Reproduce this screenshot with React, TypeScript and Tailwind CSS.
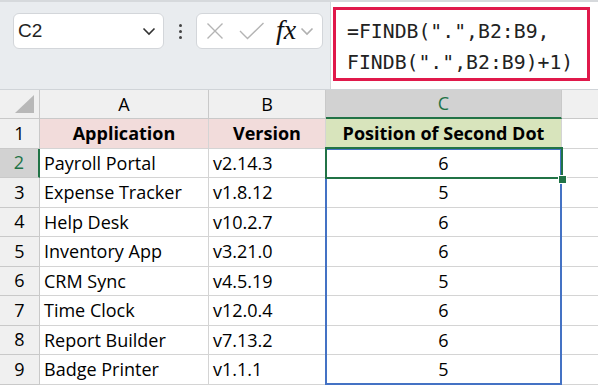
import React from "react";

const rows = [
  ["Payroll Portal", "v2.14.3", "6"],
  ["Expense Tracker", "v1.8.12", "5"],
  ["Help Desk", "v10.2.7", "6"],
  ["Inventory App", "v3.21.0", "6"],
  ["CRM Sync", "v4.5.19", "5"],
  ["Time Clock", "v12.0.4", "6"],
  ["Report Builder", "v7.13.2", "6"],
  ["Badge Printer", "v1.1.1", "5"],
];

function Chevron({ color }: { color: string }) {
  return (
    <svg width="14" height="9" viewBox="0 0 14 9" fill="none">
      <path d="M1.5 1.5 L7 7 L12.5 1.5" stroke={color} strokeWidth="1.6" />
    </svg>
  );
}

export default function App() {
  return (
    <div className="w-[598px] h-[388px] overflow-hidden bg-white relative font-['Open_Sans',sans-serif] text-black">
      {/* Toolbar */}
      <div className="h-[90px] bg-[#e9ecef] border-b border-[#d0d4d8] flex relative">
        <div className="absolute left-0 right-0 top-0 h-[2px] bg-[#d6d9dc]" />
        <div className="pt-[13px] pl-[13px] flex items-start">
          <div className="w-[151px] h-[36px] bg-white border border-[#d3d6da] rounded-[6px] flex items-center justify-between pl-[4px] pr-[7px]">
            <span className="text-[19px] font-['Liberation_Sans',sans-serif] text-[#222]">C2</span>
            <Chevron color="#333" />
          </div>
          <div className="w-[32px] h-[36px] flex flex-col items-center justify-center gap-[3px]">
            <div className="w-[3px] h-[3px] rounded-full bg-[#444]" />
            <div className="w-[3px] h-[3px] rounded-full bg-[#444]" />
            <div className="w-[3px] h-[3px] rounded-full bg-[#444]" />
          </div>
          <div className="w-[127px] h-[36px] bg-white border border-[#d3d6da] rounded-[6px] flex items-center pl-[9px] pr-[4px]">
            <svg width="18" height="18" viewBox="0 0 18 18" fill="none">
              <path d="M1.5 1.5 L16.5 16.5 M16.5 1.5 L1.5 16.5" stroke="#b4b4b4" strokeWidth="1.4" />
            </svg>
            <svg width="26" height="18" viewBox="0 0 26 18" fill="none" className="ml-[15px]">
              <path d="M1 9 L8.5 16.5 L24.5 1" stroke="#b4b4b4" strokeWidth="1.4" />
            </svg>
            <span className="ml-[11px] text-[28px] italic font-['Liberation_Serif',serif] text-[#111] leading-none mb-[3px]">fx</span>
            <span className="ml-[4px] flex items-center">
              <Chevron color="#b0b0b0" />
            </span>
          </div>
        </div>
        <div className="ml-auto w-[268px] bg-white border-l border-[#d3d6da] mt-[2px] relative">
          <div className="pl-[16px] pt-[14px] font-['DejaVu_Sans_Mono',monospace] text-[19.8px] leading-[31px] text-[#222] whitespace-pre">
            <div>=FINDB(".",B2:B9,</div>
            <div>FINDB(".",B2:B9)+1)</div>
          </div>
          <div className="absolute left-[2px] top-[5px] w-[257px] h-[74px] border-[3px] border-[#e0194b]" />
        </div>
      </div>

      {/* Grid */}
      <div className="relative">
        {/* Column header row */}
        <div className="flex h-[29px] text-[18px]">
          <div className="w-[40px] shrink-0 bg-[#f0f0f0] border-r border-b border-[#c9c9c9] relative">
            <svg width="20" height="18" viewBox="0 0 20 18" className="absolute right-[4px] bottom-[5px]">
              <path d="M19 0 L19 18 L0 18 Z" fill="#b8b8b8" />
            </svg>
          </div>
          <div className="w-[169px] shrink-0 bg-[#f0f0f0] border-r border-b border-[#c9c9c9] flex items-center justify-center">A</div>
          <div className="w-[117px] shrink-0 bg-[#f0f0f0] border-r border-b border-[#c9c9c9] flex items-center justify-center">B</div>
          <div className="w-[236px] shrink-0 bg-[#d2d2d2] border-r border-[#c9c9c9] border-b-2 border-b-[#217346] flex items-center justify-center text-[#217346]">C</div>
          <div className="flex-1 bg-[#f0f0f0] border-b border-[#c9c9c9]" />
        </div>
        {/* Row 1 */}
        <div className="flex h-[29.5px] text-[18px]">
          <div className="w-[40px] shrink-0 bg-[#f0f0f0] border-r border-b border-[#c9c9c9] flex items-center justify-center">1</div>
          <div className="w-[169px] shrink-0 bg-[#f2dcdb] border-r border-b border-[#d4d4d4] flex items-center justify-center font-bold">Application</div>
          <div className="w-[117px] shrink-0 bg-[#f2dcdb] border-r border-b border-[#d4d4d4] flex items-center justify-center font-bold">Version</div>
          <div className="w-[236px] shrink-0 bg-[#d8e4bc] border-r border-b border-[#d4d4d4] flex items-center justify-center font-bold">Position of Second Dot</div>
          <div className="flex-1 border-b border-[#d4d4d4]" />
        </div>
        {rows.map((r, i) => {
          const sel = i === 0;
          return (
            <div key={i} className="flex h-[29.5px] text-[18px]">
              {sel ? (
                <div className="w-[40px] shrink-0 bg-[#d2d2d2] border-b border-[#c9c9c9] border-r-2 border-r-[#217346] flex items-center justify-center text-[#217346]">
                  {i + 2}
                </div>
              ) : (
                <div className="w-[40px] shrink-0 bg-[#f0f0f0] border-r border-b border-[#c9c9c9] flex items-center justify-center">
                  {i + 2}
                </div>
              )}
              <div className="w-[169px] shrink-0 border-r border-b border-[#d4d4d4] flex items-center pl-[4px] pt-[1px]">{r[0]}</div>
              <div className="w-[117px] shrink-0 border-r border-b border-[#d4d4d4] flex items-center pl-[4px] pt-[1px]">{r[1]}</div>
              <div className="w-[236px] shrink-0 border-r border-b border-[#d4d4d4] flex items-center justify-center pt-[1px]">{r[2]}</div>
              <div className="flex-1 border-b border-[#d4d4d4]" />
            </div>
          );
        })}
        {/* Selection range C2:C9 */}
        <div className="absolute left-[325px] top-[58px] w-[237px] h-[237px] border-2 border-[#4472c4] pointer-events-none" />
        {/* Active cell C2 */}
        <div className="absolute left-[325px] top-[57px] w-[238px] h-[32px] border-2 border-[#217346] pointer-events-none" />
        {/* Fill handle */}
        <div className="absolute left-[558px] top-[85px] w-[7px] h-[7px] bg-[#217346] border border-white box-content" />
      </div>
    </div>
  );
}
